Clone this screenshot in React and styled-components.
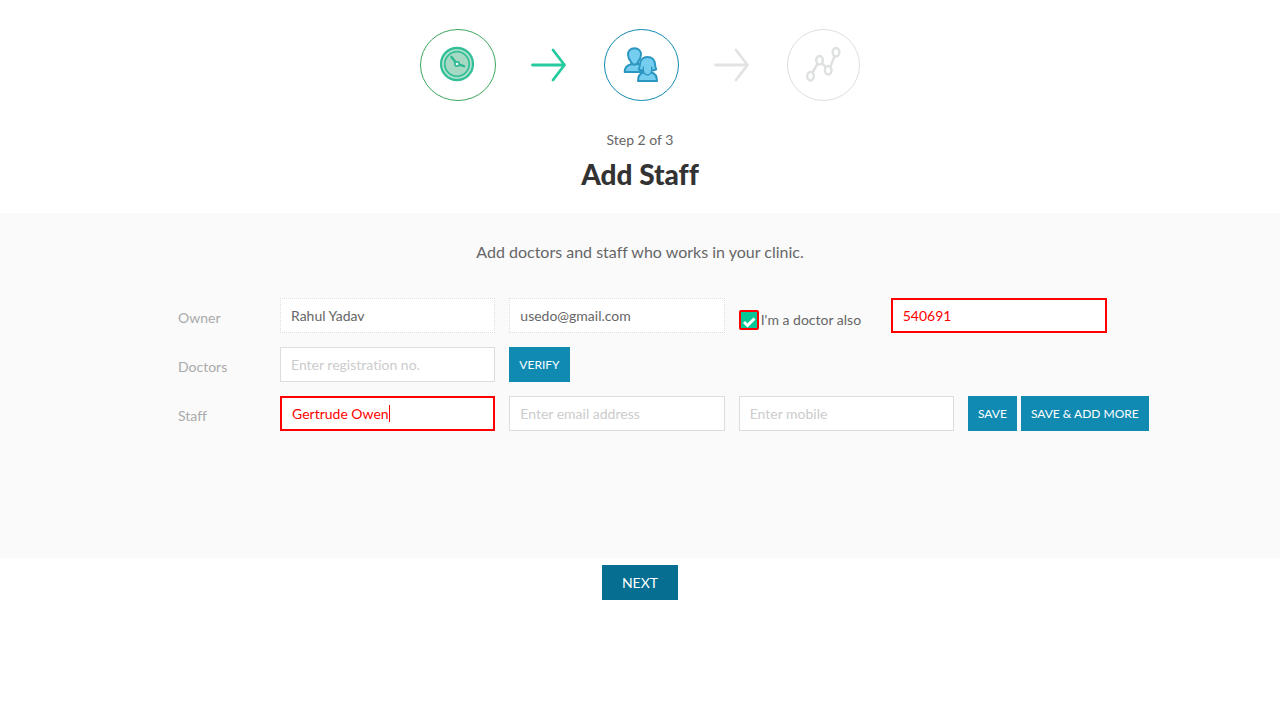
import React from "react";
import styled, { createGlobalStyle, css } from "styled-components";

const GlobalStyle = createGlobalStyle`
  *, *::before, *::after { box-sizing: border-box; }
  body {
    margin: 0;
    background: #fff;
    color: #666;
    font-family: Lato, "Liberation Sans", sans-serif;
    font-size: 14px;
    font-variant-ligatures: none;
    line-height: 20px;
  }
`;

const Header = styled.header`
  display: flex;
  flex-direction: column;
  align-items: center;
  padding: 29px 16px 21px;
`;

const Steps = styled.ol`
  display: flex;
  align-items: center;
  gap: 35px;
  margin: 0 0 29px;
  padding: 0;
  list-style: none;
`;

const Step = styled.li`
  display: flex;
`;

const StepCount = styled.p`
  margin: 0 0 6px;
`;

const Title = styled.h1`
  margin: 0;
  color: #333;
  font-size: 28px;
  font-weight: 900;
  line-height: 36px;
`;

const Panel = styled.main`
  min-height: 345px;
  padding: 29px 0 24px;
  background: #fafafa;
`;

const Intro = styled.p`
  margin: 0 0 36px;
  font-size: 16px;
  text-align: center;
`;

const Form = styled.form`
  display: flex;
  flex-direction: column;
  gap: 14px;
  max-width: 1170px;
  margin: 0 auto;
  padding: 0 79px 0 123px;
`;

const Row = styled.div`
  display: grid;
  grid-template-columns: 88px repeat(3, 1fr) 178px;
  column-gap: 14px;
`;

const RowLabel = styled.label`
  padding-top: 10px;
  color: #aaa;
`;

const Field = styled.div`
  position: relative;
  display: flex;
  min-width: 0;
`;

const Input = styled.input`
  width: 100%;
  min-width: 0;
  height: 35px;
  padding: 0 10px;
  border: 1px solid #ddd;
  border-radius: 0;
  outline: 0;
  background: #fff;
  color: #666;
  font: inherit;
  font-variant-ligatures: none;

  &::placeholder { color: #ccc; opacity: 1; }

  ${(p) => p.readOnly && css`border-style: dotted;`}
  ${(p) => p.$invalid && css`
    border: 2px solid #f00;
    color: #f00;
  `}
`;

const Caret = styled.span`
  position: absolute;
  top: 9px;
  left: 109px;
  width: 1px;
  height: 17px;
  background: #f00;
`;

const DoctorArea = styled.div`
  grid-column: 4 / 6;
  display: flex;
  gap: 30px;
`;

const RegistrationField = styled(Field)`
  flex: 0 1 216px;
`;

const CheckLabel = styled.label`
  display: flex;
  flex: none;
  align-items: center;
  gap: 2px;
  width: 122px;
  padding-top: 8px;
  white-space: nowrap;
`;

const CheckBox = styled.span`
  position: relative;
  display: block;
  width: 20px;
  height: 20px;

  svg {
    position: absolute;
    inset: 0;
    pointer-events: none;
  }
`;

const CheckInput = styled.input`
  appearance: none;
  display: block;
  width: 20px;
  height: 20px;
  margin: 0;
  border: 2px solid #f00;
  border-radius: 2px;
  background: #fff;

  &:checked { background: #06c795; }
  &:not(:checked) + svg { display: none; }
`;

const Button = styled.button`
  height: 35px;
  padding: 0 10px;
  border: 0;
  background: #118ab2;
  color: #fff;
  font: inherit;
  font-size: 12px;
  white-space: nowrap;
  cursor: pointer;
`;

const NextButton = styled(Button)`
  padding: 0 20px;
  background: #066e91;
  font-size: 14px;
`;

const Actions = styled.div`
  display: flex;
  gap: 4px;
`;

const Footer = styled.footer`
  display: flex;
  justify-content: center;
  padding: 7px 0 24px;
`;

function ClockStep() {
  return (
    <svg width="76" height="72" viewBox="0 0 76 72" fill="none" role="img" aria-label="Clinic timings">
      <ellipse cx="38" cy="36" rx="37.5" ry="35.5" stroke="#3aa65c" />
      <circle cx="37" cy="35" r="16" fill="#b5e3d1" stroke="#35bf99" strokeWidth="2.3" />
      <circle cx="37" cy="35" r="12.3" fill="#a5d9c3" stroke="#35bf99" strokeWidth="1.8" />
      <path d="M31.5 28 37 35 44 37.2" stroke="#2eb892" strokeWidth="2.4" strokeLinecap="round" />
      <circle cx="37" cy="35" r="2.2" fill="#fff" stroke="#2eb892" strokeWidth="1.7" />
    </svg>
  );
}

function StaffStep() {
  return (
    <svg width="75" height="72" viewBox="0 0 75 72" fill="none" role="img" aria-label="Add staff">
      <ellipse cx="37.5" cy="36" rx="37" ry="35.5" stroke="#118ab2" />
      <g fill="#75cdf0" stroke="#2b97c1" strokeWidth="2" strokeLinejoin="round">
        <path d="M27 35.2c-4.200 1-6.300 3.800-6.300 7.800h18v-6.500l-5-1.800z" />
        <path d="M30.500 19.300c-4.100 0-6.700 2.700-6.500 6.500.2 3 1.300 4.900 2.700 6.600.7 2 2 3.400 3.800 3.400s3.100-1.400 3.800-3.400c1.400-1.700 2.500-3.600 2.700-6.600.2-3.800-2.400-6.500-6.500-6.500z" />
        <path d="M43.500 28c-4.500 0-7.200 3-7.500 7-.2 2.300-.4 3.700-1.200 5.300 1.700 1 3.500 1.300 5.200 1.200h7c1.700.1 3.500-.2 5.200-1.200-.8-1.600-1-3-1.200-5.300-.3-4-3-7-7.500-7z" />
        <path d="M40 43.300c-4 1-6 4-6 8.700h19c0-4.700-2-7.700-6-8.700" />
        <path d="M39.500 36v5c0 3 1.600 5 4 5s4-2 4-5v-5z" stroke="none" />
        <path d="M39.300 37.500v4.300c.6 2.400 2 4 4.200 4s3.600-1.600 4.200-4v-4.300" fill="none" strokeWidth="1.300" />
      </g>
    </svg>
  );
}

function ReportStep() {
  return (
    <svg width="73" height="72" viewBox="0 0 73 72" fill="none" role="img" aria-label="Reports">
      <ellipse cx="36.5" cy="36" rx="36" ry="35.5" stroke="#dedede" />
      <g stroke="#dfe1e1" strokeWidth="2.5">
        <path d="M25.5 43.5 30.5 35M35 33.7l3.500 4.500M43.300 37.500l4.200-10" />
        <ellipse cx="23.500" cy="47.300" rx="3.300" ry="4.200" />
        <ellipse cx="32.500" cy="31.300" rx="3.300" ry="4.200" />
        <ellipse cx="41.200" cy="41.200" rx="3.300" ry="4.200" />
        <ellipse cx="49" cy="23.300" rx="3.300" ry="4.200" />
      </g>
    </svg>
  );
}

function Arrow({ color }) {
  return (
    <svg width="38" height="36" viewBox="0 0 38 36" fill="none" aria-hidden="true">
      <path d="M1.500 18H33.500M22 3 33.500 18 22 33" stroke={color} strokeWidth="2.800" strokeLinecap="round" strokeLinejoin="round" />
    </svg>
  );
}

export default function App() {
  return (
    <>
      <GlobalStyle />
      <Header>
        <Steps>
          <Step><ClockStep /></Step>
          <Step aria-hidden="true"><Arrow color="#26ca9f" /></Step>
          <Step aria-current="step"><StaffStep /></Step>
          <Step aria-hidden="true"><Arrow color="#e2e4e3" /></Step>
          <Step><ReportStep /></Step>
        </Steps>
        <StepCount>Step 2 of 3</StepCount>
        <Title>Add Staff</Title>
      </Header>
      <Panel>
        <Intro>Add doctors and staff who works in your clinic.</Intro>
        <Form onSubmit={(e) => e.preventDefault()}>
          <Row>
            <RowLabel htmlFor="owner-name">Owner</RowLabel>
            <Field><Input id="owner-name" defaultValue="Rahul Yadav" readOnly /></Field>
            <Field><Input type="email" aria-label="Owner email" defaultValue="usedo@gmail.com" readOnly /></Field>
            <DoctorArea>
              <CheckLabel>
                <CheckBox>
                  <CheckInput type="checkbox" defaultChecked />
                  <svg width="20" height="20" viewBox="0 0 20 20" fill="none" aria-hidden="true">
                    <path d="M5 12 8.500 15.500 15.500 8.500" stroke="#fff" strokeWidth="3" />
                  </svg>
                </CheckBox>
                I'm a doctor also
              </CheckLabel>
              <RegistrationField>
                <Input aria-label="Owner registration number" defaultValue="540691" $invalid />
              </RegistrationField>
            </DoctorArea>
          </Row>
          <Row>
            <RowLabel htmlFor="doctor-reg">Doctors</RowLabel>
            <Field><Input id="doctor-reg" placeholder="Enter registration no." /></Field>
            <Actions><Button type="button">VERIFY</Button></Actions>
          </Row>
          <Row>
            <RowLabel htmlFor="staff-name">Staff</RowLabel>
            <Field>
              <Input id="staff-name" defaultValue="Gertrude Owen" $invalid />
              <Caret aria-hidden="true" />
            </Field>
            <Field><Input type="email" aria-label="Staff email" placeholder="Enter email address" /></Field>
            <Field><Input type="tel" aria-label="Staff mobile" placeholder="Enter mobile" /></Field>
            <Actions>
              <Button type="submit">SAVE</Button>
              <Button type="button">SAVE &amp; ADD MORE</Button>
            </Actions>
          </Row>
        </Form>
      </Panel>
      <Footer>
        <NextButton type="button">NEXT</NextButton>
      </Footer>
    </>
  );
}
